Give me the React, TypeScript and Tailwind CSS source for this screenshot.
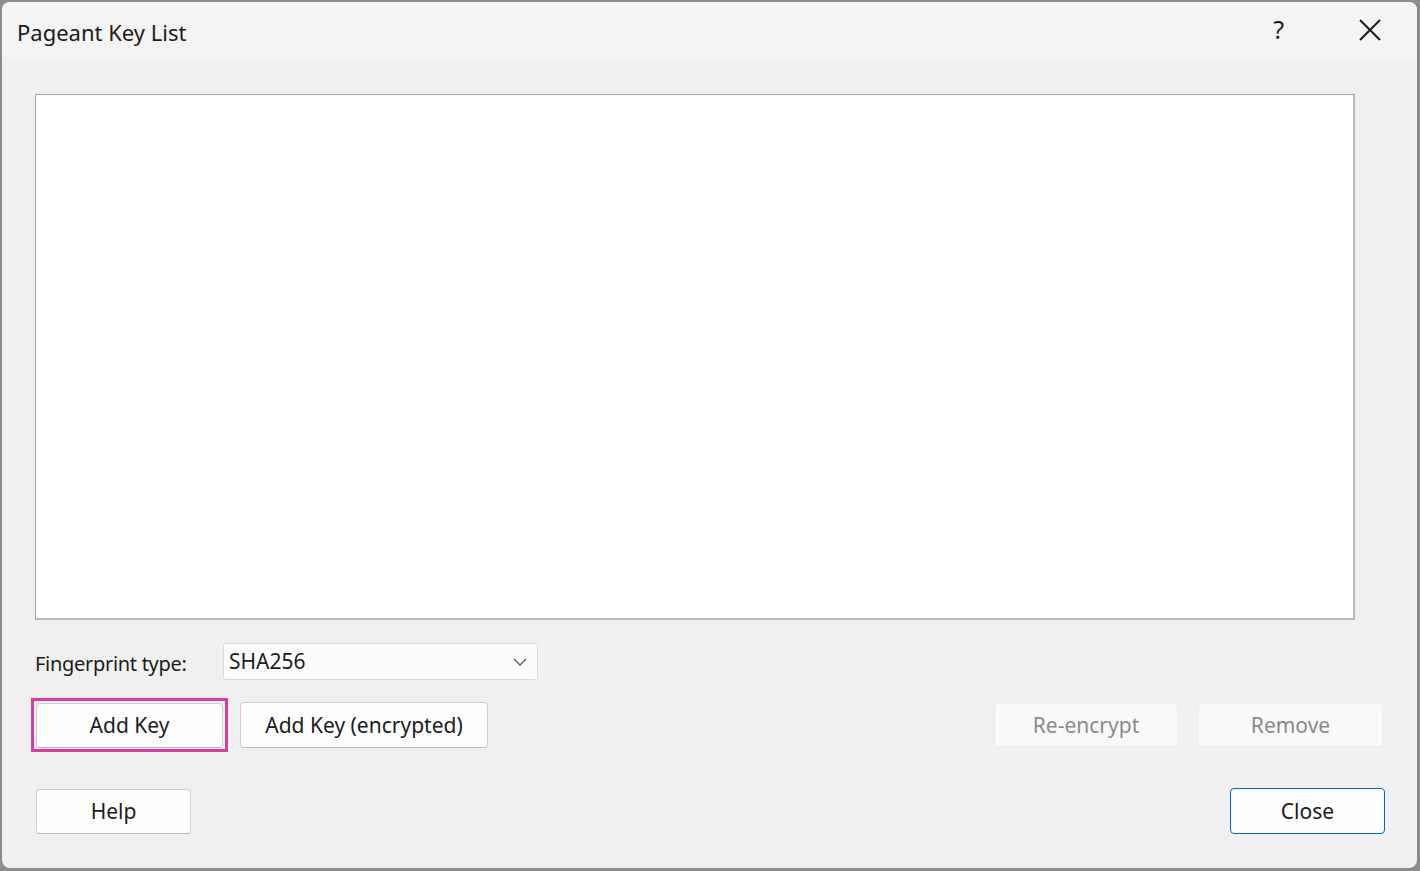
import React from "react";

const font = { fontFamily: '"Segoe UI", "Noto Sans", "Open Sans", sans-serif' };

function Btn({ children, className = "", disabled = false }: { children: React.ReactNode; className?: string; disabled?: boolean }) {
  return (
    <div
      className={`flex items-center justify-center rounded-[4px] text-[21px] leading-none ${
        disabled
          ? "bg-[#f9f9f9] text-[#8a8a8a] border border-[#ececec]"
          : "bg-[#fdfdfd] text-[#1b1b1b] border border-[#d0d0d0] border-b-[#b8b8b8]"
      } ${className}`}
    >
      {children}
    </div>
  );
}

export default function App() {
  return (
    <div className="w-[1420px] h-[871px] bg-[#8c8c8c] p-[2px] pr-[3px] pb-[3px]" style={font}>
      <div className="w-full h-full rounded-[8px] bg-[#f0f0f0] flex flex-col overflow-hidden">
        {/* title bar */}
        <div className="h-[60px] bg-[#f3f3f3] flex items-start shrink-0">
          <div className="pl-[15px] pt-[17px] text-[22px] leading-[26px] text-[#1a1a1a]">Pageant Key List</div>
          <div className="flex-1" />
          <div className="pt-[13px] text-[25px] leading-[28px] text-[#1a1a1a] mr-[75px]">?</div>
          <div className="pt-[17px] mr-[36px]">
            <svg width="22" height="22" viewBox="0 0 22 22">
              <path d="M1 1 L21 21 M21 1 L1 21" stroke="#1a1a1a" strokeWidth="2" fill="none" />
            </svg>
          </div>
        </div>
        {/* body */}
        <div className="flex-1 flex flex-col pl-[33px] pr-[32px]">
          <div className="mt-[32px] h-[526px] w-[1320px] bg-white border border-[#a5a5a5] border-r-2 border-b-2 border-r-[#b9b9b9] border-b-[#b9b9b9]" />
          <div className="mt-[23px] flex items-center h-[37px]">
            <div className="w-[188px] text-[20px] leading-none text-[#1b1b1b] pt-[4px] tracking-[-0.3px]">Fingerprint type:</div>
            <div className="w-[315px] h-[37px] bg-[#fbfbfb] border border-[#d9d9d9] rounded-[3px] flex items-center pl-[5px] pr-[10px]">
              <span className="text-[21px] leading-none text-[#1b1b1b] flex-1">SHA256</span>
              <svg width="14" height="8" viewBox="0 0 14 8">
                <path d="M1 1 L7 7 L13 1" stroke="#555" strokeWidth="1.3" fill="none" />
              </svg>
            </div>
          </div>
          <div className="mt-[18px] flex items-center h-[54px]">
            <div className="-ml-[4px] w-[197px] h-[54px] border-[3px] border-[#d63da4] flex items-center justify-center">
              <Btn className="w-[187px] h-[45px]">Add Key</Btn>
            </div>
            <Btn className="ml-[12px] w-[248px] h-[46px]">Add Key (encrypted)</Btn>
            <div className="flex-1" />
            <Btn disabled className="w-[184px] h-[44px]">Re-encrypt</Btn>
            <Btn disabled className="ml-[20px] w-[185px] h-[44px] mr-[2px]">Remove</Btn>
          </div>
          <div className="mt-[36px] flex items-center">
            <Btn className="ml-[1px] w-[155px] h-[45px]">Help</Btn>
            <div className="flex-1" />
            <div className="w-[155px] h-[46px] rounded-[4px] bg-[#fdfdfd] border border-[#0067c0] flex items-center justify-center text-[21px] leading-none text-[#1b1b1b] mr-[0px]">
              Close
            </div>
          </div>
        </div>
      </div>
    </div>
  );
}
